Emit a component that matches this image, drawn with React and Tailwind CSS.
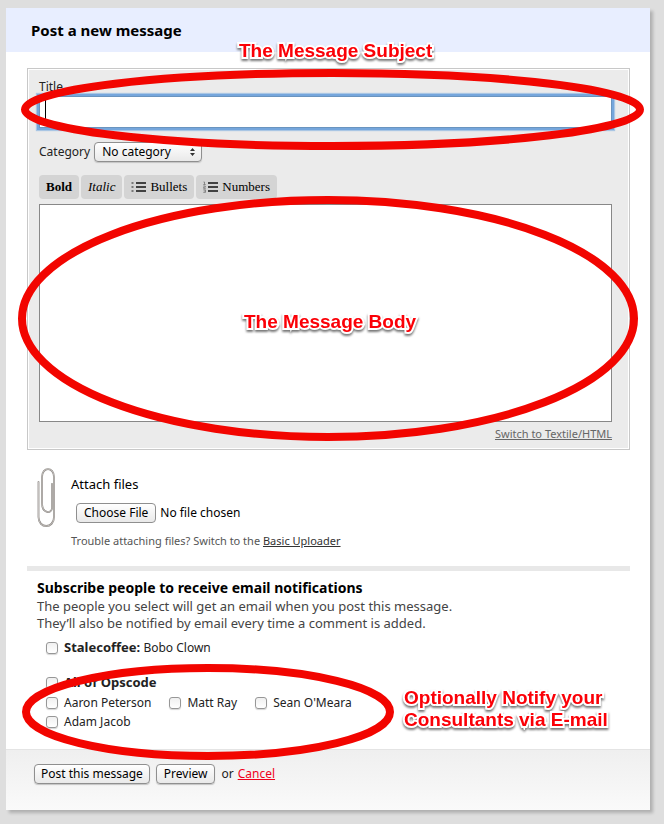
import React from "react";

const people = ["Aaron Peterson", "Matt Ray", "Sean O'Meara", "Adam Jacob"];

const macButton =
  "h-5 rounded-[4px] border border-[#8f8f8f] bg-linear-to-b from-white via-[#f4f4f4] to-[#e9e9e9] text-[12px] leading-4 text-black shadow-[0_1px_1px_#c4c4c4]";

function Ring({ className }) {
  return (
    <svg className={`pointer-events-none absolute z-10 overflow-visible ${className}`} aria-hidden="true">
      <ellipse cx="50%" cy="50%" rx="50%" ry="50%" fill="none" stroke="#f20500" strokeWidth="8" />
    </svg>
  );
}

function Callout({ className, children }) {
  return (
    <p
      className={`pointer-events-none absolute z-20 whitespace-nowrap font-['Liberation_Sans',Arial,sans-serif] text-[19px] leading-[22px] font-bold text-[#fb0007] [paint-order:stroke_fill] [-webkit-text-stroke:4px_white] [filter:drop-shadow(0_2px_1px_#777)] ${className}`}
    >
      {children}
    </p>
  );
}

function Check({ children }) {
  return (
    <label className="flex h-[19px] items-center gap-[6px]">
      <input
        type="checkbox"
        className="size-3 appearance-none rounded-[3px] border border-[#979797] bg-linear-to-b from-[#f0f0f0] to-white shadow-[0_1px_1px_#d5d5d5] checked:bg-[#5b93d0]"
      />
      <span>{children}</span>
    </label>
  );
}

function ListIcon({ numbered }) {
  return (
    <svg width="15" height="12" viewBox="0 0 15 12" aria-hidden="true">
      <path d="M5 2h10M5 6h10M5 10h10" stroke="#111" strokeWidth="1.3" />
      {numbered ? (
        <path
          d="M.5 1h1v2.5M.3 3.5h2.4M.3 5h2v1.2H.6v1.2h2.2M.3 8.8h2.2v2.6H.3M.8 10h1.6"
          fill="none"
          stroke="#777"
          strokeWidth=".8"
        />
      ) : (
        <path d="M.5 1h2v2h-2zM.5 5h2v2h-2zM.5 9h2v2h-2z" fill="#777" />
      )}
    </svg>
  );
}

function ToolButton({ className = "", children }) {
  return (
    <button
      type="button"
      className={`flex h-6 items-center gap-1 rounded-[4px] bg-[#d4d4d4] px-[7px] font-['Liberation_Serif',Georgia,serif] text-[13px] leading-4 text-black ${className}`}
    >
      {children}
    </button>
  );
}

function PaperClip() {
  return (
    <svg width="20" height="60" viewBox="0 0 20 60" fill="none" strokeLinecap="round" className="shrink-0" aria-hidden="true">
      <path
        d="M1.5 14V49C1.5 61 17 61 17 49V9C17 -1.5 5 -1.5 5 9V35C5 46 15 46 15 40V16"
        stroke="#8b8783"
        strokeWidth="1.8"
      />
      <path
        d="M1.5 14V49C1.5 61 17 61 17 49V9C17 -1.5 5 -1.5 5 9V35C5 46 15 46 15 40V16"
        stroke="#d2cecb"
        strokeWidth=".8"
      />
    </svg>
  );
}

export default function App() {
  return (
    <div className="min-h-screen border-r border-b border-white bg-[#dedede] pt-2 pr-[14px] pb-[14px] pl-[6px] font-['Noto_Sans','Open_Sans',sans-serif] text-[12px] text-[#222]">
      <form className="relative bg-white shadow-[3px_3px_3px_#b0b0b0]" onSubmit={(e) => e.preventDefault()}>
        <header className="relative flex h-11 items-center bg-[#e8eeff] px-[25px]">
          <h1 className="text-[15px] leading-5 font-bold text-black">Post a new message</h1>
          <Callout className="top-8 left-[233px]">The Message Subject</Callout>
        </header>

        <div className="pt-4 pr-5 pl-[21px]">
          <section className="border border-[#c8c8c8] bg-[#ebebeb] pt-[10px] pr-[17px] pb-[6px] pl-[11px] shadow-[inset_0_0_0_1px_white]">
            <label htmlFor="title" className="block h-[17px] leading-4">
              Title
            </label>
            <div className="relative">
              <input
                id="title"
                type="text"
                className="block h-8 w-full border border-[#6a94bf] bg-white px-2 text-[16px] shadow-[0_0_0_2px_#75a6dc,0_0_1px_3px_#a9c6e4] outline-none"
              />
              <span className="absolute top-1 left-[6px] h-5 w-px bg-black" />
              <Ring className="-top-[23px] -left-[14px] h-[73px] w-[calc(100%+42px)]" />
            </div>
            <div className="mt-[14px] flex items-center gap-1">
              <label htmlFor="category" className="leading-4">
                Category
              </label>
              <span className="relative">
                <select id="category" className={`${macButton} block w-[108px] appearance-none pr-5 pl-[7px]`}>
                  <option>No category</option>
                </select>
                <svg width="5" height="8" viewBox="0 0 5 8" className="pointer-events-none absolute top-[6px] right-[7px]" aria-hidden="true">
                  <path d="M2.5 0L5 3H0zM2.5 8L0 5h5z" fill="#333" />
                </svg>
              </span>
            </div>
            <div className="mt-[13px] flex gap-[2px]">
              <ToolButton className="font-bold">Bold</ToolButton>
              <ToolButton className="italic">Italic</ToolButton>
              <ToolButton>
                <ListIcon />
                Bullets
              </ToolButton>
              <ToolButton>
                <ListIcon numbered />
                Numbers
              </ToolButton>
            </div>
            <div className="relative mt-[5px]">
              <textarea
                aria-label="Message body"
                className="block h-[218px] w-full resize-none border border-[#888] bg-white p-2 outline-none"
              />
              <Ring className="-top-1 -left-[17px] h-[237px] w-[calc(100%+39px)]" />
              <Callout className="top-[107px] left-[205px]">The Message Body</Callout>
            </div>
            <div className="mt-[3px] text-right">
              <a href="#textile" className="text-[11px] leading-4 text-[#666] underline">
                Switch to Textile/HTML
              </a>
            </div>
          </section>

          <section className="mt-[18px] flex gap-[14px] px-[10px]">
            <PaperClip />
            <div className="pt-[6px]">
              <label htmlFor="files" className="block text-[13px] leading-5 text-black">
                Attach files
              </label>
              <input
                id="files"
                type="file"
                className="mt-[9px] ml-[5px] block h-5 text-[12px] leading-5 text-black file:mr-1 file:h-5 file:rounded-[4px] file:border file:border-solid file:border-[#8f8f8f] file:bg-linear-to-b file:from-white file:to-[#e9e9e9] file:px-[7px] file:text-[12px] file:leading-4 file:text-black"
              />
              <p className="mt-[10px] text-[11px] leading-4 text-[#555]">
                Trouble attaching files? Switch to the{" "}
                <a href="#basic" className="text-[#333] underline">
                  Basic Uploader
                </a>
              </p>
            </div>
          </section>

          <hr className="mt-[17px] h-[5px] border-0 bg-[#e8e8e8]" />

          <section className="px-[10px] pt-[9px] pb-[18px]">
            <h2 className="text-[14px] leading-4 font-bold text-black">Subscribe people to receive email notifications</h2>
            <p className="mt-[2px] text-[13px] leading-[17px] text-[#444]">
              The people you select will get an email when you post this message.
              <br />
              They’ll also be notified by email every time a comment is added.
            </p>
            <div className="mt-[6px] pl-[9px]">
              <Check>
                <b className="text-[13px]">Stalecoffee:</b> Bobo Clown
              </Check>
            </div>
            <div className="relative mt-4 pl-[9px]">
              <Check>
                <b className="text-[13px]">All of Opscode</b>
              </Check>
              <div className="mt-[1px] flex max-w-[340px] flex-wrap gap-x-[18px]">
                {people.map((name) => (
                  <Check key={name}>{name}</Check>
                ))}
              </div>
              <Ring className="-top-[5px] -left-[11px] h-[88px] w-[364px]" />
              <Callout className="top-[14px] left-[367px]">
                Optionally Notify your
                <br />
                Consultants via E-mail
              </Callout>
            </div>
          </section>
        </div>

        <footer className="flex h-[61px] items-start border-t border-[#e4e4e4] bg-linear-to-b from-[#efefef] to-[#fafafa] px-7 pt-[14px] leading-5">
          <button type="submit" className={`${macButton} mr-[6px] px-[6px]`}>
            Post this message
          </button>
          <button type="button" className={`${macButton} mr-[6px] px-[7px]`}>
            Preview
          </button>
          <span className="mr-1">or</span>
          <a href="#cancel" className="text-[#f0001c] underline">
            Cancel
          </a>
        </footer>
      </form>
    </div>
  );
}
